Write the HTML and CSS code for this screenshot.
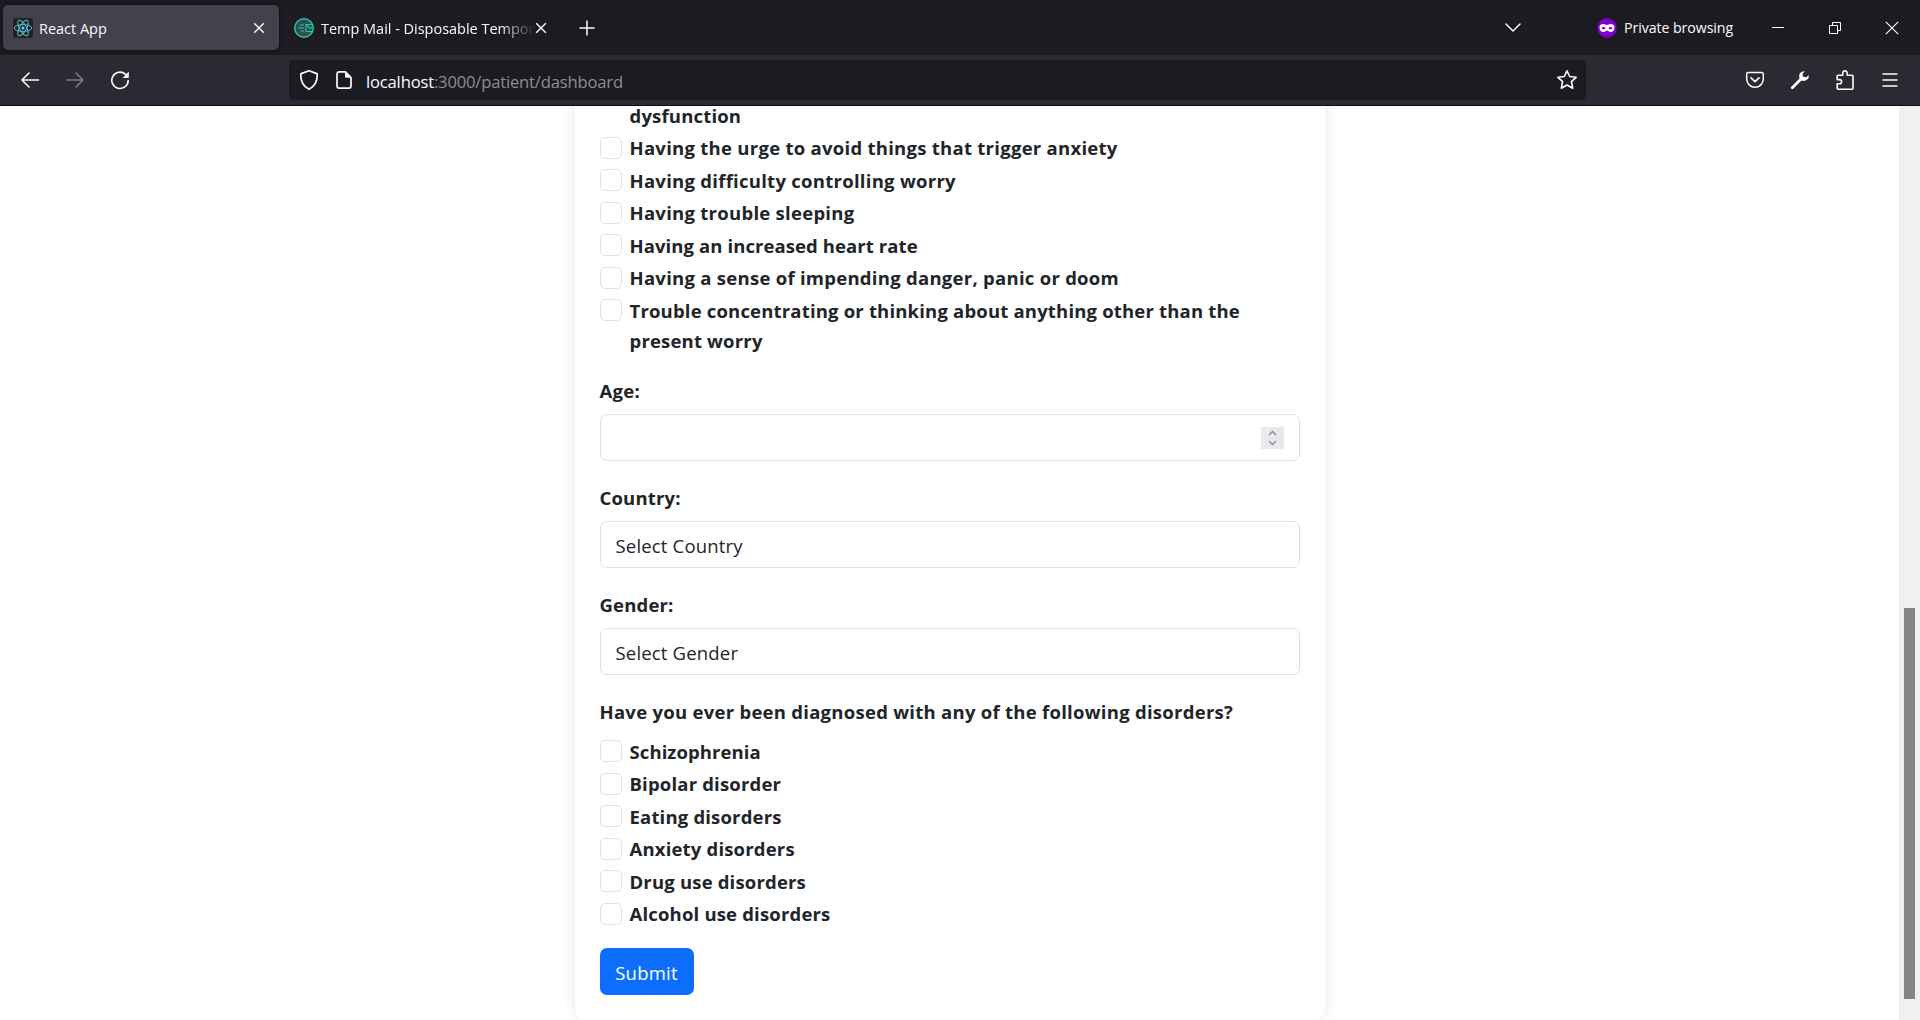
FILE: index.html
```html
<!DOCTYPE html>
<html lang="en">
<head>
<meta charset="utf-8">
<title>React App</title>
<link rel="stylesheet" href="styles.css">
</head>
<body>
<div class="window">
  <header class="tabbar">
    <div class="tab tab-active">
      <svg class="icon" width="20" height="20" viewBox="0 0 20 20"><rect width="20" height="20" rx="2" fill="#222"/><g fill="none" stroke="#56bcd8" stroke-width="1"><ellipse cx="10" cy="10" rx="8.8" ry="3.4"/><ellipse cx="10" cy="10" rx="8.8" ry="3.4" transform="rotate(60 10 10)"/><ellipse cx="10" cy="10" rx="8.8" ry="3.4" transform="rotate(120 10 10)"/></g><circle cx="10" cy="10" r="1.6" fill="#61dafb"/></svg>
      <span class="tab-title">React App</span>
      <svg class="icon" width="12" height="12" viewBox="0 0 12 12"><path d="M1.2 1.2l9.6 9.6M10.8 1.2L1.2 10.8" stroke="#fbfbfe" stroke-width="1.4"/></svg>
    </div>
    <div class="tab tab-second">
      <svg class="icon" width="20" height="20" viewBox="0 0 20 20"><circle cx="10" cy="10" r="9.2" fill="#3b4657" stroke="#14cc9e" stroke-width="1.6"/><path d="M5.500 7h4.500M4 10h6M6.500 13h3.500M18 6.500h-6v7h6M12.500 7l3.500 3.500L18 9" fill="none" stroke="#14cc9e" stroke-width="1.100"/></svg>
      <span class="tab-title tab-fade">Temp Mail - Disposable Tempor</span>
      <svg class="icon" width="12" height="12" viewBox="0 0 12 12"><path d="M1.200 1.200l9.600 9.600M10.800 1.200L1.200 10.800" stroke="#fbfbfe" stroke-width="1.400"/></svg>
    </div>
    <svg class="icon new-tab" width="16" height="16" viewBox="0 0 16 16"><path d="M8 .5v15M.5 8h15" stroke="#fbfbfe" stroke-width="1.500"/></svg>
    <svg class="icon all-tabs" width="16" height="10" viewBox="0 0 16 10"><path d="M1 1l7 7 7-7" fill="none" stroke="#fbfbfe" stroke-width="1.500" stroke-linecap="round" stroke-linejoin="round"/></svg>
    <div class="private">
      <svg class="icon" width="20" height="20" viewBox="0 0 20 20"><circle cx="10" cy="10" r="9.700" fill="#8000d7"/><path fill="#fff" fill-rule="evenodd" d="M6.2 6C8 6 8.6 7 10 7s2-1 3.800-1C16.200 6 17.500 7.300 17.500 9.400c0 2.700-1.500 4.600-3.900 4.600-2 0-2.400-1.600-3.600-1.600S8.400 14 6.400 14C4 14 2.500 12.100 2.500 9.400 2.500 7.300 3.800 6 6.200 6zM4.500 9.900c.5.900 1.200 1.400 2.100 1.400s1.500-.5 1.900-1.100c-.5-.9-1.100-1.300-1.900-1.300s-1.500.3-2.100 1zm7 .3c.4.600 1 1.100 1.900 1.100s1.600-.5 2.100-1.400c-.6-.7-1.300-1-2.100-1s-1.400.4-1.900 1.300z"/></svg>
      <span class="private-text">Private browsing</span>
    </div>
    <div class="caption">
      <svg class="icon" width="14" height="14" viewBox="0 0 14 14"><path d="M1 6.500h12" stroke="#fff"/></svg>
      <svg class="icon" width="14" height="14" viewBox="0 0 14 14"><path d="M1.500 4.500h8v8h-8zM4.500 4.500v-3h8v8h-3" fill="none" stroke="#fff"/></svg>
      <svg class="icon" width="14" height="14" viewBox="0 0 14 14"><path d="M.8.8l12.400 12.400M13.200.8L.8 13.200" stroke="#fff" stroke-width="1.100"/></svg>
    </div>
  </header>
  <div class="toolbar">
    <div class="nav">
      <svg class="icon" width="20" height="20" viewBox="0 0 20 20"><path d="M18.500 10H2M9 3L2 10l7 7" fill="none" stroke="#fbfbfe" stroke-width="1.600" stroke-linecap="round" stroke-linejoin="round"/></svg>
      <svg class="icon" width="20" height="20" viewBox="0 0 20 20"><path d="M1.500 10H18M11 3l7 7-7 7" fill="none" stroke="#7c7b82" stroke-width="1.600" stroke-linecap="round" stroke-linejoin="round"/></svg>
      <svg class="icon" width="20" height="20" viewBox="0 0 20 20"><path d="M18.200 10.500A8.200 8.200 0 1 1 15.600 4.300" fill="none" stroke="#fbfbfe" stroke-width="1.600" stroke-linecap="round"/><path d="M18.800 1.500v5.800a.7.7 0 0 1-.7.7h-5.400z" fill="#fbfbfe"/></svg>
    </div>
    <div class="urlbar">
      <svg class="icon" width="20" height="22" viewBox="0 0 20 22"><path d="M10 1.800l7.800 2.800a.8.8 0 0 1 .5.800c0 6.500-1.800 11.600-8.300 14.800C3.500 17 1.700 11.900 1.700 5.400a.8.8 0 0 1 .5-.8z" fill="none" stroke="#fbfbfe" stroke-width="1.700" stroke-linejoin="round"/></svg>
      <svg class="icon doc" width="16" height="20" viewBox="0 0 16 20"><path d="M9.500 1.900H3a2 2 0 0 0-2 2v12.200a2 2 0 0 0 2 2h10a2 2 0 0 0 2-2V7.500z" fill="none" stroke="#fbfbfe" stroke-width="1.700" stroke-linejoin="round"/><path d="M9 1.200l6.500 6.500H10a1 1 0 0 1-1-1z" fill="#fbfbfe"/></svg>
      <div class="url"><span class="host">localhost</span>:3000/patient/dashboard</div>
      <svg class="icon" width="22" height="22" viewBox="0 0 22 22"><path d="M11 1.800l2.700 5.700 6.400.8-4.700 4.400 1.300 6.500L11 16l-5.700 3.200 1.300-6.500L1.900 8.300l6.400-.8z" fill="none" stroke="#fbfbfe" stroke-width="1.600" stroke-linejoin="round"/></svg>
    </div>
    <div class="tools">
      <svg class="icon" width="20" height="20" viewBox="0 0 20 20"><path d="M3.200 2.500h13.600A1.500 1.500 0 0 1 18.300 4v5a8.300 8.300 0 0 1-16.600 0V4a1.500 1.500 0 0 1 1.500-1.500z" fill="none" stroke="#fbfbfe" stroke-width="1.500"/><path d="M6 7.800l4 3.900 4-3.900" fill="none" stroke="#fbfbfe" stroke-width="1.700" stroke-linecap="round" stroke-linejoin="round"/></svg>
      <svg class="icon" width="20" height="20" viewBox="0 0 20 20"><path d="M2.300 17.700L11 9" stroke="#fbfbfe" stroke-width="2.800" stroke-linecap="round"/><path d="M14.800 1.200a5 5 0 0 0-5.500 6.300c.4 1.800 1.600 3 3.400 3.300a5.200 5.200 0 0 0 6.200-5.600l-2.800 2.100-2.900-.6-.8-2.600z" fill="#fbfbfe"/></svg>
      <svg class="icon" width="20" height="22" viewBox="0 0 20 22"><path d="M3.200 20.200a1 1 0 0 1-1-1v-4.400h2.300a2.100 2.100 0 0 0 0-4.200H2.200V7.200a1 1 0 0 1 1-1h4.600V4.100a2.200 2.200 0 0 1 4.400 0v2.100H17a1 1 0 0 1 1 1v12a1 1 0 0 1-1 1z" fill="none" stroke="#fbfbfe" stroke-width="1.600" stroke-linejoin="round"/></svg>
      <svg class="icon menu" width="16" height="16" viewBox="0 0 16 16"><path d="M.5 2h15M.5 8h15M.5 14h15" stroke="#fbfbfe" stroke-width="1.400"/></svg>
    </div>
  </div>
  <div class="page">
    <main class="viewport">
      <form class="card">
        <div class="checks">
          <div class="check check-wrapped"><span>dysfunction</span></div>
          <label class="check loose"><input type="checkbox"><span>Having the urge to avoid things that trigger anxiety</span></label>
          <label class="check loose"><input type="checkbox"><span>Having difficulty controlling worry</span></label>
          <label class="check loose"><input type="checkbox"><span>Having trouble sleeping</span></label>
          <label class="check tight"><input type="checkbox"><span>Having an increased heart rate</span></label>
          <label class="check loose"><input type="checkbox"><span>Having a sense of impending danger, panic or doom</span></label>
          <label class="check"><input type="checkbox"><span>Trouble concentrating or thinking about anything other than the<br>present worry</span></label>
        </div>
        <div class="group">
          <div class="label loose">Age:</div>
          <div class="control control-number">
            <svg class="spinner" width="23" height="22" viewBox="0 0 23 22"><rect width="23" height="22" fill="#e9e9ed"/><path d="M8 8l3.500-3.500L15 8M8 14l3.500 3.500L15 14" fill="none" stroke="#8f8f9d" stroke-width="1.500"/></svg>
          </div>
        </div>
        <div class="group">
          <div class="label">Country:</div>
          <div class="control">Select Country</div>
        </div>
        <div class="group">
          <div class="label">Gender:</div>
          <div class="control">Select Gender</div>
        </div>
        <div class="group">
          <div class="label loose">Have you ever been diagnosed with any of the following disorders?</div>
          <div class="checks">
            <label class="check tight"><input type="checkbox"><span>Schizophrenia</span></label>
            <label class="check"><input type="checkbox"><span>Bipolar disorder</span></label>
            <label class="check"><input type="checkbox"><span>Eating disorders</span></label>
            <label class="check"><input type="checkbox"><span>Anxiety disorders</span></label>
            <label class="check"><input type="checkbox"><span>Drug use disorders</span></label>
            <label class="check"><input type="checkbox"><span>Alcohol use disorders</span></label>
          </div>
        </div>
        <button class="submit" type="button">Submit</button>
      </form>
    </main>
    <div class="scrollbar"><div class="thumb"></div></div>
  </div>
</div>
</body>
</html>
```
FILE: styles.css
```css
* { box-sizing: border-box; }

body {
  margin: 0;
  background: #fff;
  color: #212529;
  font-family: "Open Sans", "Noto Sans", sans-serif;
}

.window {
  display: flex;
  flex-direction: column;
  width: 1920px;
  height: 1020px;
  overflow: hidden;
}

.icon { display: block; flex: none; }

/* Tab strip */
.tabbar {
  display: flex;
  align-items: center;
  flex: none;
  height: 55px;
  padding: 0 21px 0 3px;
  background: #1c1b22;
  color: #fbfbfe;
  font-size: 14.5px;
}

.tab {
  display: flex;
  align-items: center;
  height: 45px;
  padding: 0 14px 0 10px;
}

.tab-active {
  width: 276px;
  border-radius: 5px;
  background: #42414d;
  box-shadow: 0 0 4px rgba(0, 0, 0, .5);
}

.tab-second { width: 279px; padding: 0 11px 0 15px; }

.tab-title {
  flex: 1;
  min-width: 0;
  margin-left: 7px;
  padding-top: 1px;
  overflow: hidden;
  letter-spacing: -.02px;
  white-space: nowrap;
}

.tab-active .tab-title { margin-left: 6px; }

.tab-fade {
  -webkit-mask-image: linear-gradient(to left, transparent, #000 36px);
  mask-image: linear-gradient(to left, transparent, #000 36px);
}

.new-tab { margin-left: 21px; }
.all-tabs { margin-left: auto; }

.private {
  display: flex;
  align-items: center;
  gap: 7px;
  width: 136px;
  margin-left: 76px;
  font-size: 14.2px;
  letter-spacing: -.08px;
  white-space: nowrap;
}

.caption { display: flex; gap: 43px; margin-left: 38px; }

/* Navigation toolbar */
.toolbar {
  display: flex;
  align-items: center;
  flex: none;
  height: 51px;
  padding: 0 22px 0 20px;
  border-bottom: 1px solid #0c0c0d;
  background: #2b2a33;
}

.nav { display: flex; gap: 25px; }

.urlbar {
  display: flex;
  align-items: center;
  width: 1297px;
  height: 40px;
  margin-left: 159px;
  padding: 0 8px 0 10px;
  border-radius: 5px;
  background: #1c1b22;
}

.doc { margin-left: 17px; }

.url {
  margin-left: 14px;
  margin-right: auto;
  padding-top: 2px;
  color: #8d8d93;
  font-size: 16.6px;
  letter-spacing: -.18px;
  white-space: nowrap;
}

.host { color: #fbfbfe; }

.tools { display: flex; align-items: center; gap: 25px; margin-left: auto; }
.menu { margin-left: 2px; }

/* Page */
.page { display: flex; flex: 1; min-height: 0; }

.viewport {
  display: flex;
  flex: 1;
  align-items: flex-end;
  justify-content: center;
  min-height: 0;
  overflow: hidden;
}

.card {
  display: flex;
  flex: none;
  flex-direction: column;
  align-items: flex-start;
  gap: 20px;
  width: 750px;
  padding: 25px;
  border-radius: 10px;
  box-shadow: 0 0 12.5px rgba(0, 0, 0, .1);
  font-size: 18.5px;
  letter-spacing: .18px;
  line-height: 30px;
}

.checks { display: flex; flex-direction: column; gap: 2.5px; }

.check {
  display: flex;
  gap: 8px;
  font-weight: 700;
  white-space: nowrap;
}

.check-wrapped { padding-left: 30px; }

.check input {
  flex: none;
  width: 22px;
  height: 22px;
  margin: 5px 0 0;
  border: 1px solid #dee2e6;
  border-radius: 5px;
  appearance: none;
}

.check span { position: relative; top: 1.4px; }

/* Tracking variants */
.loose { letter-spacing: .27px; }
.tight { letter-spacing: .09px; }

.group { display: flex; flex-direction: column; gap: 10px; width: 100%; }

.label { height: 30px; padding-top: 1.4px; font-weight: 700; }

.control {
  display: flex;
  align-items: center;
  height: 47px;
  padding: 2px 15px 0;
  border: 1px solid #dee2e6;
  border-radius: 7px;
}

.control-number { justify-content: flex-end; padding-top: 0; }

.spinner { display: block; }

.submit {
  width: 94px;
  height: 47px;
  margin-top: .3px;
  padding: 2px 0 0;
  border: 0;
  border-radius: 7px;
  background: #0d6efd;
  color: #fff;
  font: inherit;
  letter-spacing: .25px;
}

.scrollbar {
  flex: none;
  width: 21px;
  padding: 502px 5px 0;
  background: #f0f0f0;
}

.thumb { height: 391px; background: #858585; }
```
